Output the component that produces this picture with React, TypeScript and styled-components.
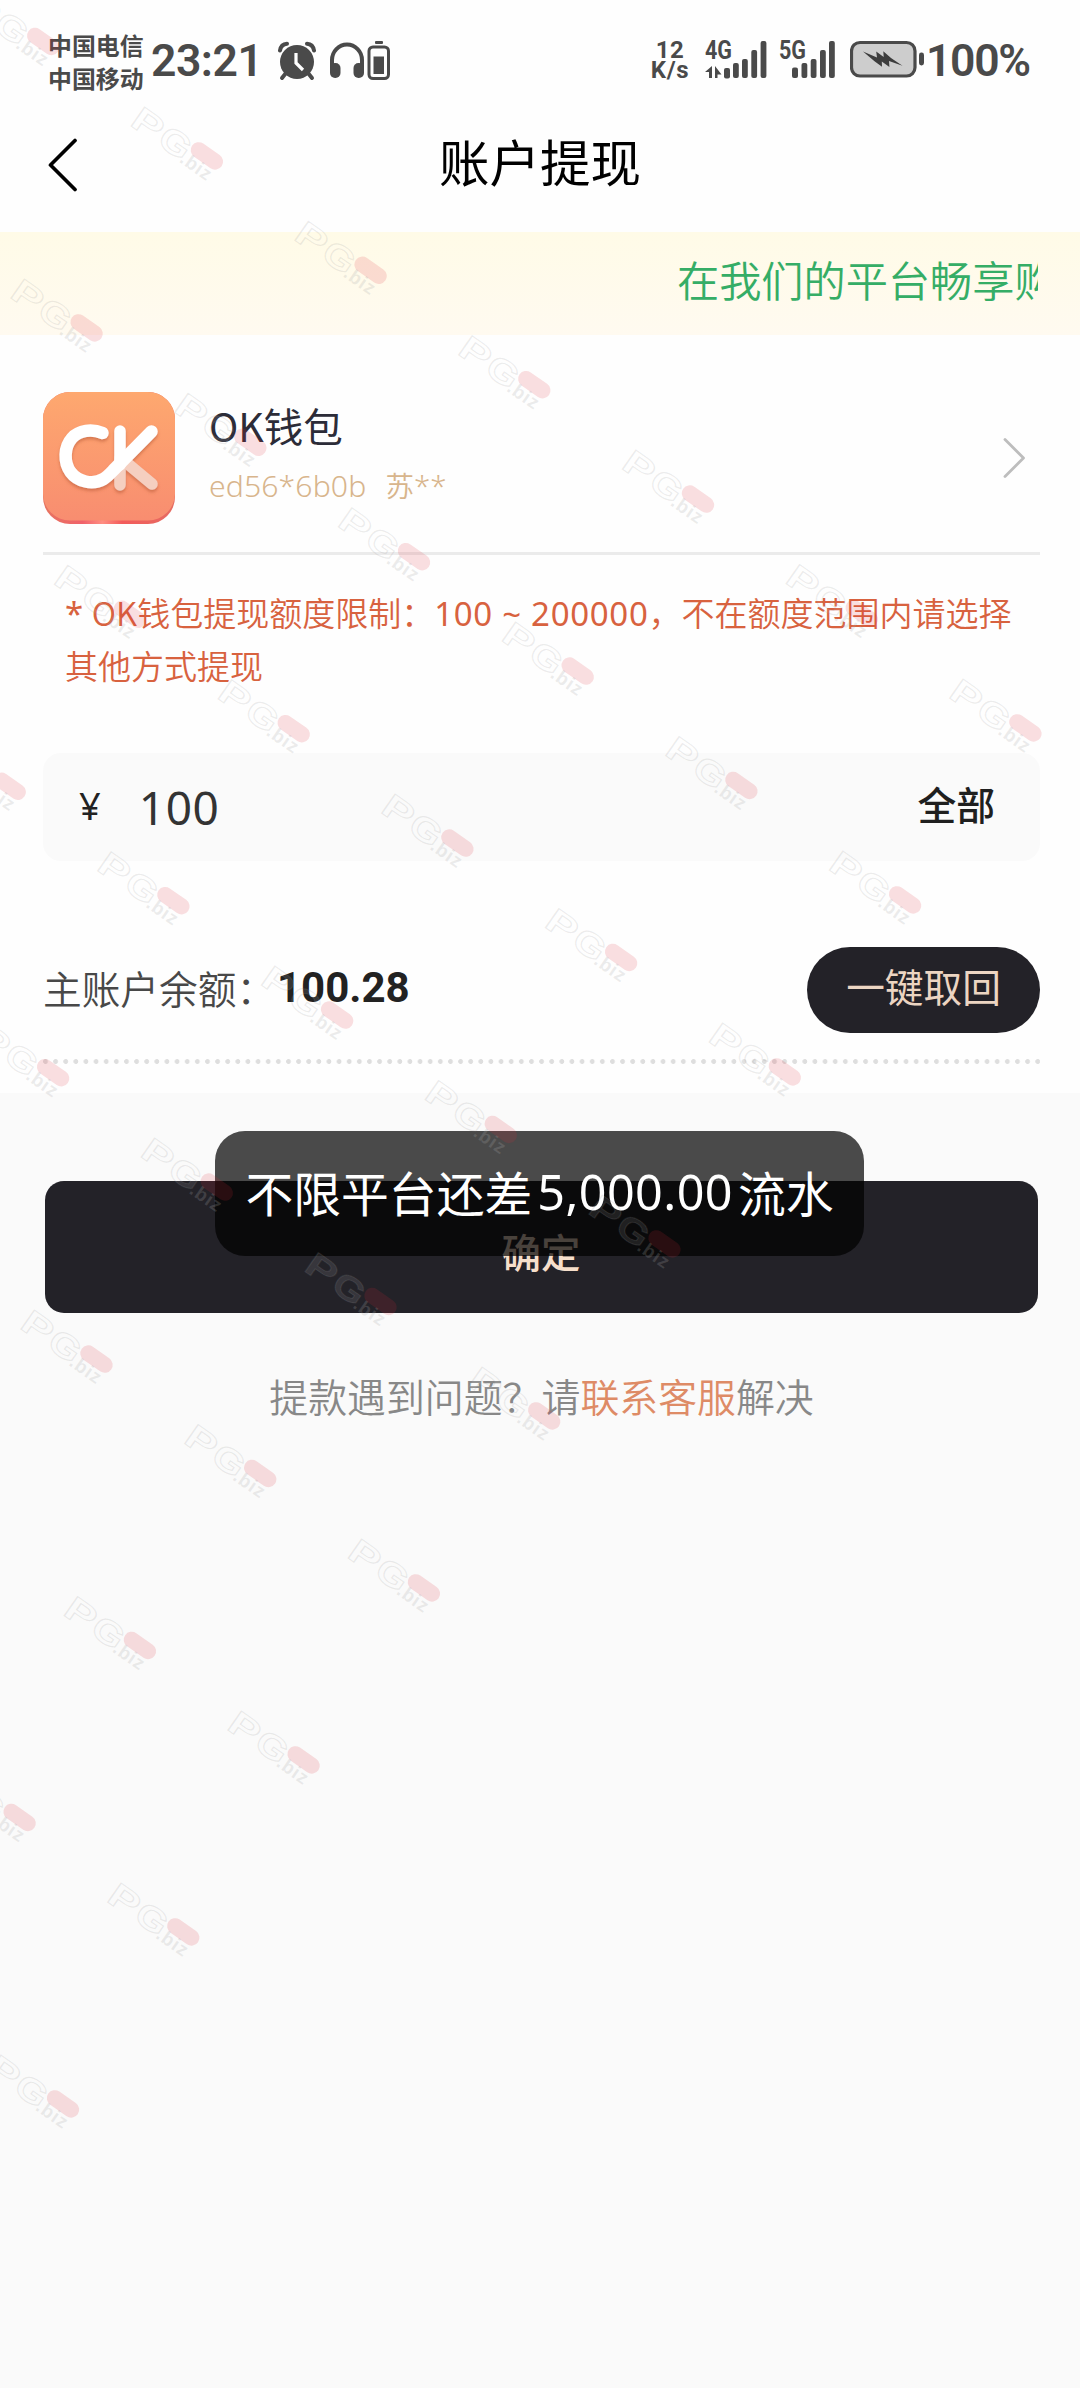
import React from 'react';
import styled, { createGlobalStyle } from 'styled-components';

const Global = createGlobalStyle`
  * { box-sizing: border-box; }
  body { margin: 0; background: #fafafa; }
  button { border: 0; padding: 0; background: none; font: inherit; color: inherit; }
`;

const Screen = styled.main`
  position: relative;
  width: 1080px;
  height: 2388px;
  overflow: hidden;
  background: #fafafa;
  color: #222;
  font-family: 'Noto Sans CJK SC', 'Noto Sans', sans-serif;
`;

const Sheet = styled.section`
  height: 1093px;
  background: #fefefe;
`;

const StatusBar = styled.header`
  display: flex;
  justify-content: space-between;
  height: 112px;
  padding: 28px 50px 0 48px;
  color: #4a4a4a;
`;

const StatusGroup = styled.div`
  display: flex;
  align-items: center;
  height: 66px;
`;

const Carriers = styled.div`
  width: 103px;
  font-size: 23.9px;
  font-weight: 700;
  line-height: 33px;
`;

const Clock = styled.div<{ $width: number; $spacing?: number }>`
  width: ${(p) => p.$width}px;
  font-family: Roboto, sans-serif;
  font-size: 44.5px;
  font-weight: 600;
  line-height: 66px;
  letter-spacing: ${(p) => p.$spacing ?? 0}px;
  white-space: nowrap;
`;

const IconSlot = styled.div<{ $w: number; $ml?: number }>`
  display: flex;
  width: ${(p) => p.$w}px;
  height: 66px;
  margin-left: ${(p) => p.$ml ?? 0}px;
`;

const Speed = styled.div`
  width: 40px;
  margin-top: -2px;
  font-family: Roboto, sans-serif;
  font-size: 24px;
  font-weight: 700;
  line-height: 20px;
  text-align: center;
  letter-spacing: 0.6px;
`;

const NavBar = styled.nav`
  display: grid;
  grid-template-columns: 120px 1fr 120px;
  align-items: center;
  height: 120px;
  padding-bottom: 14px;
`;

const BackButton = styled.button`
  display: flex;
  padding-left: 47px;
`;

const Title = styled.h1`
  margin: 0;
  padding-bottom: 10px;
  color: #000;
  font-size: 50.5px;
  font-weight: 400;
  line-height: 60px;
  text-align: center;
`;

const Notice = styled.div`
  display: flex;
  height: 103px;
  padding: 0 42px 0 677px;
  background: linear-gradient(#fffbe7, #fffaf0);
`;

const NoticeText = styled.p`
  flex: 1;
  margin: 0;
  overflow: hidden;
  color: #35ad66;
  font-size: 42.2px;
  font-weight: 350;
  line-height: 94px;
  white-space: nowrap;
`;

const Body = styled.div`
  padding: 0 40px 0 43px;
`;

const Wallet = styled.div`
  display: flex;
  align-items: center;
  height: 220px;
  padding: 28px 13px 0 0;
  border-bottom: 3px solid #ebebeb;
`;

const WalletInfo = styled.div`
  flex: 1;
  padding: 0 0 8px 34px;
`;

const WalletName = styled.div`
  color: #2c2c38;
  font-size: 39.5px;
  line-height: 54px;
`;

const WalletAccount = styled.div`
  margin-top: 8px;
  color: #d8b58c;
  font-size: 28.5px;
  font-weight: 350;
  line-height: 50px;
  white-space: pre;
`;

const Latin = styled.span<{ $size?: number; $spacing?: number; $weight?: number; $gap?: number }>`
  margin: 0 ${(p) => p.$gap ?? 0}px;
  font-family: 'Noto Sans', sans-serif;
  font-size: ${(p) => (p.$size ? `${p.$size}px` : 'inherit')};
  font-weight: ${(p) => p.$weight ?? 'inherit'};
  line-height: 1;
  letter-spacing: ${(p) => p.$spacing ?? 0}px;
`;

const Limit = styled.p`
  height: 198px;
  margin: 0;
  padding: 31px 0 0 22px;
  color: #d8623f;
  font-size: 33px;
  font-weight: 350;
  line-height: 53px;
  white-space: nowrap;
`;

const AmountField = styled.div`
  display: flex;
  align-items: center;
  height: 108px;
  padding: 0 45px 4px 36px;
  border-radius: 18px;
  background: #fafafa;
`;

const Amount = styled.div`
  display: flex;
  flex: 1;
  padding: 3px 0 0 38px;
  color: #333;
`;

const AllButton = styled.button`
  padding-bottom: 5px;
  font-size: 38.8px;
  font-weight: 500;
  color: #1f1f1f;
`;

const Balance = styled.div`
  display: flex;
  align-items: center;
  height: 86px;
  margin-top: 86px;
`;

const BalanceLabel = styled.div`
  width: 234px;
  padding-bottom: 6px;
  color: #484848;
  font-size: 38.7px;
  font-weight: 350;
  line-height: 60px;
  white-space: nowrap;
`;

const BalanceValue = styled.div`
  flex: 1;
  padding-bottom: 4px;
  color: #222;
  font-family: Roboto, sans-serif;
  font-size: 42px;
  font-weight: 700;
  line-height: 60px;
`;

const Recall = styled.button`
  width: 233px;
  height: 86px;
  padding-bottom: 10px;
  border-radius: 43px;
  background: #232228;
  color: #ecd5c2;
  font-size: 38.7px;
`;

const Dots = styled.div`
  height: 5px;
  margin-top: 26px;
  background: radial-gradient(circle at 2.5px 2.5px, #dedede 2.1px, transparent 2.7px) 0 0 / 10.13px 5px repeat-x;
`;

const Footer = styled.section`
  display: flex;
  flex-direction: column;
  align-items: center;
  padding-top: 88px;
`;

const Confirm = styled.button`
  width: 993px;
  height: 132px;
  margin-left: 2px;
  padding-top: 7px;
  border-radius: 19px;
  background: #232228;
  color: #f6dfcb;
  font-size: 39.5px;
  font-weight: 500;
`;

const Help = styled.p`
  margin: 52px 0 0 3px;
  color: #888;
  font-size: 38.9px;
  font-weight: 350;
  line-height: 60px;
`;

const HelpLink = styled.span`
  color: #de8b66;
`;

const Toast = styled.div`
  position: absolute;
  top: 1131px;
  left: 215px;
  display: flex;
  align-items: center;
  justify-content: center;
  width: 649px;
  height: 125px;
  padding-bottom: 4px;
  border-radius: 30px;
  background: rgba(0, 0, 0, 0.705);
  color: #fff;
  font-size: 47.8px;
  font-weight: 400;
  white-space: nowrap;
`;

const WatermarkLayer = styled.svg`
  position: absolute;
  inset: 0;
  pointer-events: none;
  font-family: 'Liberation Sans', sans-serif;
  font-weight: 700;
`;

const marks: { x: number; y: number }[] = [];
for (let row = 0; row < 9; row++) {
  for (let n = 0; n < 8; n++) {
    const x = 947.5 - 120.3 * row - 163.7 * n;
    const y = 677 + 172 * row - 114.4 * n;
    if (x > -110 && y > -60) marks.push({ x, y });
  }
}

const Watermarks = () => (
  <WatermarkLayer width="1080" height="2388" viewBox="0 0 1080 2388">
    {marks.map((m) => (
      <g key={`${m.x}:${m.y}`} transform={`translate(${m.x} ${m.y}) rotate(35)`}>
        <g fill="#fff" fillOpacity="0.11" stroke="#8c8c8c" strokeOpacity="0.17" strokeWidth="1.1">
          <text x="11" y="16" fontSize="34" textLength="31" lengthAdjust="spacingAndGlyphs">P</text>
          <text x="44" y="16" fontSize="34" textLength="32" lengthAdjust="spacingAndGlyphs">G</text>
        </g>
        <text x="73" y="18" fontSize="19" fill="#aaa" fillOpacity="0.22" letterSpacing="0.8">.biz</text>
        <rect x="75" y="-11" width="36" height="16" rx="8" fill="#dc2838" fillOpacity="0.15" />
      </g>
    ))}
  </WatermarkLayer>
);

const Alarm = () => (
  <svg width="38" height="66" viewBox="0 0 38 66" fill="none">
    <circle cx="19" cy="34" r="17" fill="#4a4a4a" />
    <path d="M2 22.5Q3 16 9 15.7M29 15.7Q35 16 36 22.5" stroke="#4a4a4a" strokeWidth="4" strokeLinecap="round" />
    <path d="M8 45l-4 5M30 45l4 5" stroke="#4a4a4a" strokeWidth="4" strokeLinecap="round" />
    <path d="M18 25v10l7 7" stroke="#fff" strokeWidth="3.2" />
  </svg>
);

const Headphones = () => (
  <svg width="36" height="66" viewBox="0 0 36 66" fill="none">
    <path d="M3 42V32a15 15.5 0 0 1 30 0v10" stroke="#4a4a4a" strokeWidth="4" />
    <rect x="1" y="35" width="10.5" height="15" rx="5" fill="#4a4a4a" />
    <rect x="24.5" y="35" width="10.5" height="15" rx="5" fill="#4a4a4a" />
  </svg>
);

const DeviceBattery = () => (
  <svg width="24" height="66" viewBox="0 0 24 66" fill="none">
    <rect x="8" y="13" width="8" height="3" rx="1" fill="#4a4a4a" />
    <rect x="2" y="19" width="19.5" height="31.5" rx="4" stroke="#4a4a4a" strokeWidth="3" />
    <rect x="6.5" y="28.5" width="10.5" height="17.5" fill="#4a4a4a" />
  </svg>
);

const Signal = ({ label, transfer }: { label: string; transfer?: boolean }) => (
  <svg width="64" height="66" viewBox="0 0 64 66" fill="#4a4a4a">
    <text x="0" y="31" fontFamily="Roboto, sans-serif" fontWeight="700" fontSize="25.5" textLength="27" lengthAdjust="spacingAndGlyphs">{label}</text>
    {transfer && <path d="M7 38v12H4v-6H0zM10 38v12h2.500v-3.500h4z" />}
    <rect x={transfer ? 19 : 13} y={transfer ? 40 : 39.5} width="6" height="10.5" rx="2" />
    <rect x={transfer ? 28 : 22.5} y="35" width="5.8" height="15" rx="2" />
    <rect x={transfer ? 37 : 31.7} y="31" width="5.8" height="19" rx="2" />
    <rect x={transfer ? 46.3 : 41} y="22" width="5.8" height="28" rx="2" />
    <rect x={transfer ? 55.6 : 50} y="13" width="5.8" height="37" rx="2" />
  </svg>
);

const Battery = () => (
  <svg width="76" height="66" viewBox="0 0 76 66">
    <rect x="1.5" y="14.5" width="63.5" height="33.5" rx="8.5" fill="#cdcdcd" stroke="#4a4a4a" strokeWidth="3.2" />
    <rect x="69" y="24.5" width="5" height="13" rx="2.4" fill="#4a4a4a" />
    <path d="M13 23.5l14 6-.8-6 7.5 5.5-.4-5.7L41 30l11.500 7.800-13.500-4.800.4 6-7.600-5.500.2 5.300-7.500-5.500z" fill="#3c3c3c" />
  </svg>
);

const BackArrow = () => (
  <svg width="32" height="54" viewBox="0 0 32 54" fill="none">
    <path d="M28 2.500L3.500 27 28 51.500" stroke="#000" strokeWidth="3.700" strokeLinecap="round" strokeLinejoin="round" />
  </svg>
);

const Chevron = () => (
  <svg width="26" height="42" viewBox="0 0 26 42" fill="none">
    <path d="M4 2.500L22.500 21 4 39.500" stroke="#bdbdbd" strokeWidth="2.800" strokeLinecap="round" strokeLinejoin="round" />
  </svg>
);

const WalletLogo = () => (
  <svg width="132" height="132" viewBox="0 0 132 132" fill="none">
    <defs>
      <linearGradient id="face" x1="0" y1="0" x2="0" y2="1">
        <stop stopColor="#fea86f" />
        <stop offset="1" stopColor="#f88d70" />
      </linearGradient>
      <linearGradient id="edge" x1="0" y1="0" x2="1" y2="0">
        <stop stopColor="#e77560" />
        <stop offset="0.3" stopColor="#f0626a" />
        <stop offset="0.45" stopColor="#ff8e82" />
        <stop offset="0.6" stopColor="#f35b5b" />
        <stop offset="1" stopColor="#e56c62" />
      </linearGradient>
      <filter id="drop" x="-20%" y="-20%" width="140%" height="150%">
        <feDropShadow dx="0" dy="2.500" stdDeviation="1.500" floodColor="#b85836" floodOpacity="0.550" />
      </filter>
    </defs>
    <rect width="132" height="132" rx="27" fill="url(#edge)" />
    <rect width="132" height="128.500" rx="27" fill="url(#face)" />
    <g filter="url(#drop)" strokeLinecap="round" strokeWidth="11.500">
      <path d="M77 66v27" stroke="#f5cfc0" />
      <path d="M85 72l24 20" stroke="#f5cfc0" />
      <path d="M77 39v34" stroke="#fff" />
      <path d="M59.500 41C49 36.500 36 38 29 46c-8 9-8.500 24-1.500 34 7 9.500 22 13.500 33 7 5-3 8-7 12-11L108.500 39.500" stroke="#fff" strokeWidth="12.500" />
    </g>
  </svg>
);

export default function App() {
  return (
    <Screen>
      <Global />
      <Sheet>
        <StatusBar>
          <StatusGroup>
            <Carriers>
              <div>中国电信</div>
              <div>中国移动</div>
            </Carriers>
            <Clock $width={110} $spacing={-0.5}>23:21</Clock>
            <IconSlot $w={38} $ml={16.5}><Alarm /></IconSlot>
            <IconSlot $w={36} $ml={13}><Headphones /></IconSlot>
            <IconSlot $w={24} $ml={2.5}><DeviceBattery /></IconSlot>
          </StatusGroup>
          <StatusGroup>
            <Speed>
              <div>12</div>
              <div>K/s</div>
            </Speed>
            <IconSlot $w={64} $ml={15}><Signal label="4G" transfer /></IconSlot>
            <IconSlot $w={64} $ml={10}><Signal label="5G" /></IconSlot>
            <IconSlot $w={76} $ml={7}><Battery /></IconSlot>
            <Clock $width={104} $spacing={-1.3}>100%</Clock>
          </StatusGroup>
        </StatusBar>
        <NavBar>
          <BackButton aria-label="返回"><BackArrow /></BackButton>
          <Title>账户提现</Title>
        </NavBar>
        <Notice>
          <NoticeText>在我们的平台畅享购</NoticeText>
        </Notice>
        <Body>
          <Wallet>
            <WalletLogo />
            <WalletInfo>
              <WalletName>OK钱包</WalletName>
              <WalletAccount><Latin $size={30.2} $spacing={0.1}>ed56*6b0b</Latin>   苏<Latin $size={29.5}>**</Latin></WalletAccount>
            </WalletInfo>
            <Chevron />
          </Wallet>
          <Limit>
            <Latin $weight={400}>* </Latin>OK钱包提现额度限制：<Latin $weight={400} $spacing={0.7}>100 ~ 200000</Latin>，不在额度范围内请选择
            <br />
            其他方式提现
          </Limit>
          <AmountField>
            <Latin $size={38}>¥</Latin>
            <Amount><Latin $size={46} $spacing={0.6}>100</Latin></Amount>
            <AllButton>全部</AllButton>
          </AmountField>
          <Balance>
            <BalanceLabel>主账户余额：</BalanceLabel>
            <BalanceValue>100.28</BalanceValue>
            <Recall>一键取回</Recall>
          </Balance>
          <Dots />
        </Body>
      </Sheet>
      <Footer>
        <Confirm>确定</Confirm>
        <Help>提款遇到问题？请<HelpLink>联系客服</HelpLink>解决</Help>
      </Footer>
      <Toast>
        不限平台还差<Latin $size={48.5} $spacing={0.4} $weight={400} $gap={5}>5,000.00</Latin>流水
      </Toast>
      <Watermarks />
    </Screen>
  );
}
